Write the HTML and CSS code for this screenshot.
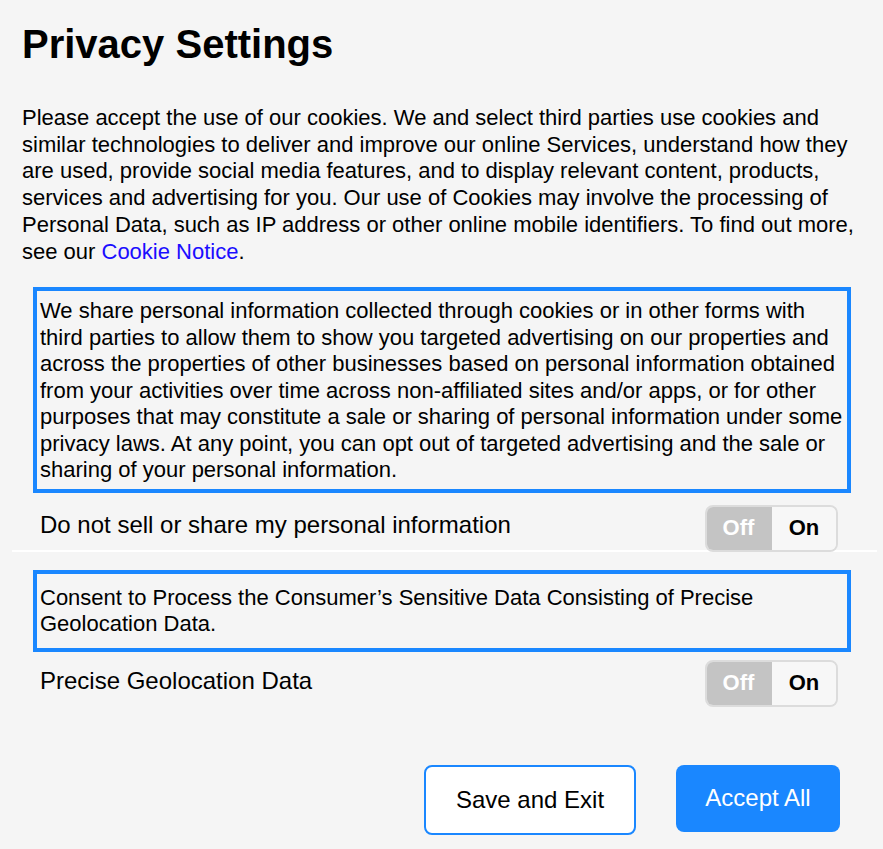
FILE: index.html
```html
<!DOCTYPE html>
<html lang="en">
<head>
    <meta charset="UTF-8">
    <meta name="viewport" content="width=device-width, initial-scale=1.0">
    <title>Privacy Settings</title>
    <link rel="stylesheet" href="styles.css">
</head>
<body>
    <div class="container">
        <h1>Privacy Settings</h1>
        <p class="intro">Please accept the use of our cookies. We and select third parties use cookies and similar technologies to deliver and improve our online Services, understand how they are used, provide social media features, and to display relevant content, products, services and advertising for you. Our use of Cookies may involve the processing of Personal Data, such as IP address or other online mobile identifiers. To find out more, see our <a href="#" class="link">Cookie Notice</a>.</p>

        <div class="notice notice-first">We share personal information collected through cookies or in other forms with third parties to allow them to show you targeted advertising on our properties and across the properties of other businesses based on personal information obtained from your activities over time across non-affiliated sites and/or apps, or for other purposes that may constitute a sale or sharing of personal information under some privacy laws. At any point, you can opt out of targeted advertising and the sale or sharing of your personal information.</div>
        <div class="setting setting-divided">
            <span class="setting-label">Do not sell or share my personal information</span>
            <div class="toggle">
                <span class="toggle-off">Off</span>
                <span class="toggle-on">On</span>
            </div>
        </div>

        <div class="notice notice-second">Consent to Process the Consumer’s Sensitive Data Consisting of Precise Geolocation Data.</div>
        <div class="setting setting-last">
            <span class="setting-label">Precise Geolocation Data</span>
            <div class="toggle">
                <span class="toggle-off">Off</span>
                <span class="toggle-on">On</span>
            </div>
        </div>

        <div class="actions">
            <button class="btn btn-save">Save and Exit</button>
            <button class="btn btn-accept">Accept All</button>
        </div>
    </div>
</body>
</html>
```

FILE: styles.css
```css
body {
    font-family: 'Liberation Sans', Arial, sans-serif;
    margin: 0;
    padding: 0;
    background: #f5f5f5;
    color: #000;
}
.container {
    padding: 21px 22px 0 22px;
}
h1 {
    font-size: 40px;
    line-height: 46px;
    font-weight: bold;
    margin: 0 0 38px 0;
}
.intro {
    font-size: 22px;
    line-height: 26.7px;
    margin: 0 0 22px 0;
}
.link {
    color: #1a0dff;
    text-decoration: none;
}
.notice {
    font-size: 22px;
    line-height: 26.5px;
    border: 4px solid #1a87ff;
    margin: 0 10px 0 11px;
}
.notice-first {
    padding: 7px 3px 5px 3px;
}
.notice-second {
    margin-top: 18px;
    padding: 11px 3px 10px 3px;
}
.setting {
    display: flex;
    align-items: center;
    justify-content: space-between;
    margin: 0 -16px 0 -10px;
    padding: 12px 39px 0 28px;
    font-size: 24px;
}
.setting-last {
    padding-top: 8px;
}
.setting-divided {
    border-bottom: 2px solid #fff;
}
.setting-label {
    padding-bottom: 5px;
}
.setting-divided .toggle {
    margin-bottom: -2px;
}
.toggle {
    display: flex;
    height: 47px;
    box-sizing: border-box;
    border: 2px solid #dcdcdc;
    border-radius: 8px;
    overflow: hidden;
    font-size: 22px;
    font-weight: bold;
}
.toggle-off {
    width: 67px;
    margin: -2px 0 -2px -2px;
    background: #c4c4c4;
    color: #fff;
    display: flex;
    align-items: center;
    justify-content: center;
}
.toggle-on {
    width: 64px;
    background: #f7f7f7;
    color: #000;
    display: flex;
    align-items: center;
    justify-content: center;
}
.actions {
    display: flex;
    justify-content: flex-end;
    align-items: flex-start;
    gap: 40px;
    margin-top: 58px;
    padding-right: 21px;
}
.btn {
    font-family: 'Liberation Sans', Arial, sans-serif;
    font-size: 24px;
    border-radius: 8px;
    cursor: pointer;
}
.btn-save {
    width: 212px;
    height: 70px;
    background: #fff;
    color: #000;
    border: 2px solid #1a87ff;
}
.btn-accept {
    width: 164px;
    height: 67px;
    background: #1a87ff;
    color: #fff;
    border: none;
}
```
